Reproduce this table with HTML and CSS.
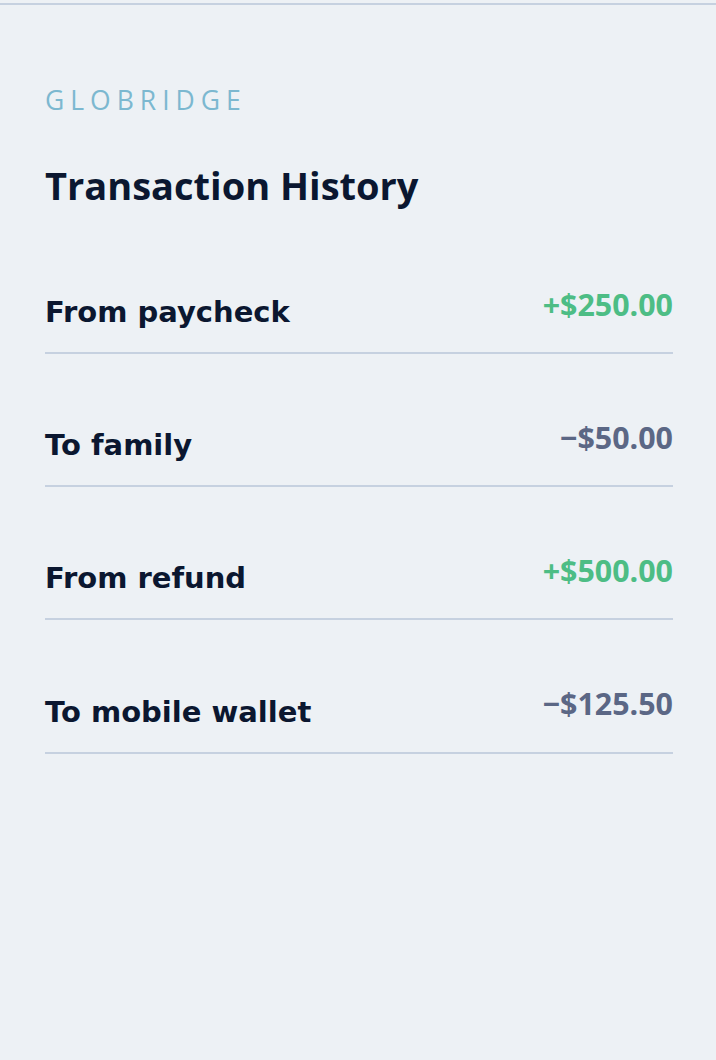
FILE: index.html
```html
<!DOCTYPE html>
<html lang="en">
<head>
<meta charset="utf-8">
<title>Transaction History</title>
<link rel="stylesheet" href="styles.css">
</head>
<body>
<div class="page">
  <main class="content">
    <div class="brand">GLOBRIDGE</div>
    <h1 class="title">Transaction History</h1>
    <ul class="list">
      <li class="row">
        <span class="label">From paycheck</span>
        <span class="amount amount-in">+$250.00</span>
      </li>
      <li class="row">
        <span class="label">To family</span>
        <span class="amount amount-out">&minus;$50.00</span>
      </li>
      <li class="row">
        <span class="label">From refund</span>
        <span class="amount amount-in">+$500.00</span>
      </li>
      <li class="row">
        <span class="label">To mobile wallet</span>
        <span class="amount amount-out">&minus;$125.50</span>
      </li>
    </ul>
  </main>
</div>
</body>
</html>
```
FILE: styles.css
```css
html, body {
  margin: 0;
  padding: 0;
  background: #edf1f5;
}
body {
  min-height: 1060px;
}
.page {
  margin-top: 3px;
  border-top: 2px solid #c6d1e0;
  min-height: 1055px;
  background: #edf1f5;
}
.content {
  padding: 0 43px 0 45px;
}
.brand {
  font-family: "Open Sans", sans-serif;
  font-weight: 400;
  font-size: 26.5px;
  line-height: 30px;
  letter-spacing: 6px;
  color: #7cb8d0;
  padding-top: 80px;
}
.title {
  margin: 0;
  font-family: "Open Sans", sans-serif;
  font-weight: 700;
  font-size: 38px;
  line-height: 46px;
  letter-spacing: 0;
  color: #0b1730;
  padding-top: 47px;
}
.list {
  list-style: none;
  margin: 0;
  padding: 81.5px 0 0 0;
}
.row {
  display: flex;
  justify-content: space-between;
  align-items: flex-end;
  padding-top: 68.8px;
  padding-bottom: 25px;
  border-bottom: 2px solid #c6d1e0;
}
.row:first-child {
  padding-top: 0;
}
.label {
  font-family: "DejaVu Sans", sans-serif;
  font-weight: 700;
  font-size: 29px;
  line-height: 1;
  color: #0b1730;
}
.amount {
  font-family: "Open Sans", sans-serif;
  font-weight: 700;
  font-size: 30.4px;
  line-height: 1;
  padding-bottom: 7px;
}
.amount-in {
  color: #4dbd85;
}
.amount-out {
  color: #5b6785;
}
```
